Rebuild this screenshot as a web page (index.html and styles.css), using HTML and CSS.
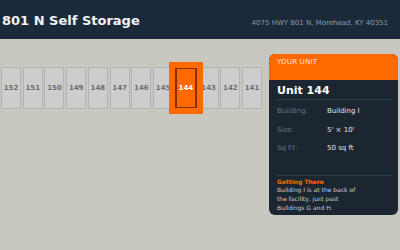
FILE: index.html
```html
<!DOCTYPE html>
<html lang="en">
<head>
<meta charset="UTF-8">
<meta name="viewport" content="width=device-width, initial-scale=1.0">
<title>801 N Self Storage</title>
<link rel="stylesheet" href="styles.css">
</head>
<body>

<header class="topbar">
  <h1 class="site-title">801 N Self Storage</h1>
  <div class="address">4075 HWY 801 N, Morehead, KY 40351</div>
</header>

<main class="main">
  <div class="units">
    <div class="unit">152</div>
    <div class="unit">151</div>
    <div class="unit">150</div>
    <div class="unit">149</div>
    <div class="unit">148</div>
    <div class="unit">147</div>
    <div class="unit">146</div>
    <div class="unit">145</div>
    <div class="unit selected">144</div>
    <div class="unit">143</div>
    <div class="unit">142</div>
    <div class="unit">141</div>
  </div>

  <aside class="card">
    <div class="card-head">YOUR UNIT</div>
    <div class="card-body">
      <h2 class="unit-name">Unit 144</h2>
      <div class="details">
        <div class="row"><span class="label">Building:</span><span class="value">Building I</span></div>
        <div class="row"><span class="label">Size:</span><span class="value">5' × 10'</span></div>
        <div class="row"><span class="label">Sq Ft:</span><span class="value">50 sq ft</span></div>
      </div>
      <div class="directions">
        <h3>Getting There</h3>
        <p>Building I is at the back of the facility, just past Buildings G and H.</p>
      </div>
    </div>
  </aside>
</main>

</body>
</html>
```

FILE: styles.css
```css
body {
  margin: 0;
  padding: 0;
  font-family: "DejaVu Sans", Verdana, sans-serif;
  background-color: #c8c8c0;
  height: 250px;
  overflow: hidden;
}
.topbar {
  display: flex;
  align-items: baseline;
  justify-content: space-between;
  height: 39px;
  box-sizing: border-box;
  padding: 13px 12px 0 2px;
  background-color: #1b2a3b;
}
.site-title {
  margin: 0;
  font-size: 13px;
  font-weight: bold;
  color: #f2f2f2;
}
.address {
  font-size: 7px;
  color: #8b9aaa;
}
.main {
  display: flex;
  align-items: flex-start;
  padding-left: 1px;
}
.units {
  display: flex;
  gap: 1.75px;
  width: 261px;
  margin-top: 28px;
}
.unit {
  position: relative;
  flex: 1;
  height: 42px;
  box-sizing: border-box;
  display: flex;
  align-items: center;
  justify-content: center;
  background-color: #cdcdcd;
  border: 1px solid #b3b3b3;
  font-size: 7px;
  font-weight: bold;
  color: #6e6e6e;
}
.unit.selected {
  z-index: 1;
  background-color: #ff6a00;
  border: 2px solid #8a2d00;
  color: #fff;
}
.unit.selected::before {
  content: "";
  position: absolute;
  top: -7px;
  bottom: -7px;
  left: -8px;
  right: -8px;
  border: 6px solid #ff6a00;
  z-index: -1;
}
.card {
  width: 129px;
  margin: 15px 0 0 7px;
  background-color: #1b2631;
  border-radius: 6px;
  overflow: hidden;
}
.card-head {
  height: 26px;
  box-sizing: border-box;
  padding: 4px 8px 0;
  background-color: #ff6a00;
  font-size: 7px;
  line-height: 8px;
  letter-spacing: 0.2px;
  color: #ffe6d2;
}
.card-body {
  padding: 0 6px 3px 8px;
}
.unit-name {
  margin: 0;
  padding: 4px 0 2px;
  font-size: 11px;
  line-height: 13px;
  color: #fff;
  border-bottom: 1px solid #2f3c49;
}
.details {
  padding-top: 2px;
  margin-bottom: 17px;
}
.row {
  display: flex;
  height: 18.5px;
  line-height: 18.5px;
  font-size: 7px;
}
.label {
  width: 50px;
  color: #677685;
}
.value {
  color: #e6e6e6;
}
.directions {
  border-top: 1px solid #2f3c49;
  padding-top: 2px;
}
.directions h3 {
  margin: 0;
  font-size: 6px;
  line-height: 8.7px;
  color: #ff6a00;
}
.directions p {
  margin: 0;
  max-width: 86px;
  font-size: 6px;
  line-height: 8.7px;
  color: #c9ced3;
}
```
